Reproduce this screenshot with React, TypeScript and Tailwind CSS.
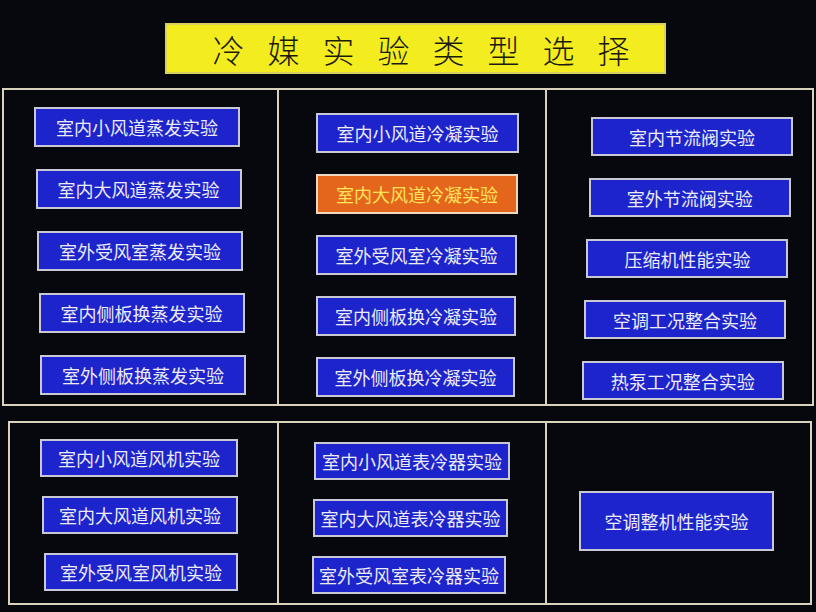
import React from "react";

type Btn = { label: string; active?: boolean; w: number; h: number; ml: number };

const cjk = { fontFamily: '"Noto Sans CJK SC", "Noto Sans", sans-serif' };

const HmiButton: React.FC<Btn> = ({ label, active, w, h, ml }) => (
  <div
    className={
      "flex items-center justify-center border-2 text-[18px] leading-none whitespace-nowrap " +
      (active
        ? "bg-[#e4661c] border-[#f0d8c0] text-[#ffe45a]"
        : "bg-[#1d24cc] border-[#c9c9d6] text-[#ecebf2]")
    }
    style={{ width: w, height: h, marginLeft: ml, ...cjk }}
  >
    {label}
  </div>
);

const topLeft = ["室内小风道蒸发实验", "室内大风道蒸发实验", "室外受风室蒸发实验", "室内侧板换蒸发实验", "室外侧板换蒸发实验"];
const topMid = ["室内小风道冷凝实验", "室内大风道冷凝实验", "室外受风室冷凝实验", "室内侧板换冷凝实验", "室外侧板换冷凝实验"];
const topRight = ["室内节流阀实验", "室外节流阀实验", "压缩机性能实验", "空调工况整合实验", "热泵工况整合实验"];
const botLeft = ["室内小风道风机实验", "室内大风道风机实验", "室外受风室风机实验"];
const botMid = ["室内小风道表冷器实验", "室内大风道表冷器实验", "室外受风室表冷器实验"];

const App: React.FC = () => {
  return (
    <div className="w-[816px] h-[612px] overflow-hidden bg-[#07070e] flex flex-col">
      {/* title */}
      <div className="pt-[23px] pl-[165px]">
        <div
          className="w-[501px] h-[51px] bg-[#f3ec1e] border-2 border-[#d8d060] flex items-center justify-center text-[32px] leading-none whitespace-nowrap text-[#1a1a10] tracking-[23px] pl-[34px]"
          style={{ fontFamily: '"Noto Sans CJK SC", serif', fontWeight: 300 }}
        >
          冷媒实验类型选择
        </div>
      </div>

      {/* top panel */}
      <div className="mt-[14px] ml-[2px] w-[812px] h-[318px] grid grid-cols-[275px_268px_269px] border-2 border-[#d9d2bc] divide-x-2 divide-[#d9d2bc]">
        <div className="flex flex-col gap-[22px] pt-[17px]">
          {topLeft.map((t, i) => (
            <HmiButton key={t} label={t} w={206} h={40} ml={30 + i * 1.5} />
          ))}
        </div>
        <div className="flex flex-col gap-[21px] pt-[23px]">
          {topMid.map((t, i) => (
            <HmiButton key={t} label={t} w={203 - i} h={40} ml={37} active={i === 1} />
          ))}
        </div>
        <div className="flex flex-col gap-[22px] pt-[27px]">
          {topRight.map((t, i) => (
            <HmiButton key={t} label={t} w={202} h={39} ml={44 - i * 2.3} />
          ))}
        </div>
      </div>

      {/* bottom panel */}
      <div className="mt-[15px] ml-[8px] w-[804px] h-[184px] grid grid-cols-[269px_268px_267px] border-2 border-[#d9d2bc] divide-x-2 divide-[#d9d2bc]">
        <div className="flex flex-col gap-[19px] pt-[16px]">
          {botLeft.map((t, i) => (
            <HmiButton key={t} label={t} w={198 - i * 2} h={38} ml={30 + i * 2} />
          ))}
        </div>
        <div className="flex flex-col gap-[19px] pt-[19px]">
          {botMid.map((t, i) => (
            <HmiButton key={t} label={t} w={196 - i} h={38} ml={35 - i} />
          ))}
        </div>
        <div className="flex items-start pt-[68px]">
          <HmiButton label="空调整机性能实验" w={195} h={60} ml={32} />
        </div>
      </div>
    </div>
  );
};

export default App;
